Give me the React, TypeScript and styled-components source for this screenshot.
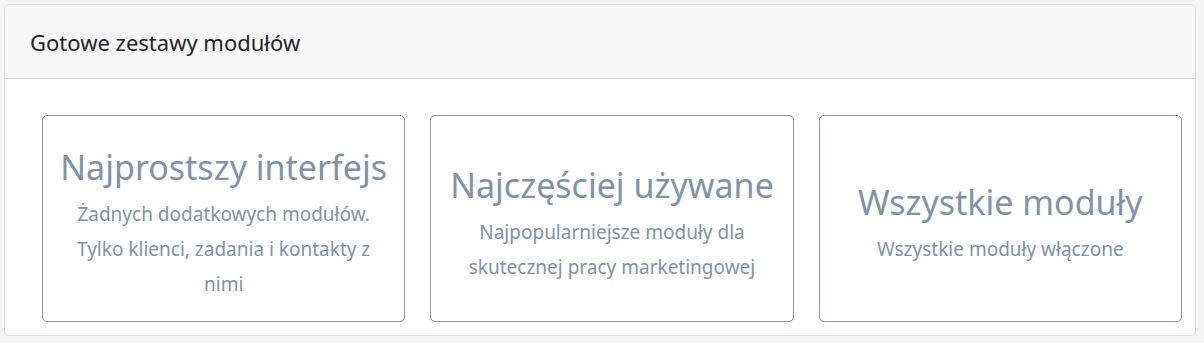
import React from 'react';
import styled, { createGlobalStyle } from 'styled-components';

const GlobalStyle = createGlobalStyle`
  body {
    margin: 0;
    background: #f4f4f4;
    font-family: "Noto Sans", "Open Sans", sans-serif;
  }
`;

const presets = [
  {
    title: 'Najprostszy interfejs',
    text: 'Żadnych dodatkowych modułów. Tylko klienci, zadania i kontakty z nimi',
  },
  {
    title: 'Najczęściej używane',
    text: 'Najpopularniejsze moduły dla skutecznej pracy marketingowej',
  },
  {
    title: 'Wszystkie moduły',
    text: 'Wszystkie moduły włączone',
  },
];

export default function App() {
  return (
    <>
      <GlobalStyle />
      <Page>
        <Panel>
          <PanelHeader>Gotowe zestawy modułów</PanelHeader>
          <PanelBody>
            {presets.map((p) => (
              <PresetCard key={p.title}>
                <PresetTitle>{p.title}</PresetTitle>
                <PresetText>{p.text}</PresetText>
              </PresetCard>
            ))}
          </PanelBody>
        </Panel>
      </Page>
    </>
  );
}

const Page = styled.div`
  padding: 4px 8px 8px 4px;
`;

const Panel = styled.section`
  background: #fff;
  border: 1px solid #dedede;
  border-radius: 5px;
  overflow: hidden;
`;

const PanelHeader = styled.header`
  height: 73px;
  display: flex;
  align-items: center;
  padding: 0 25px;
  background: #f7f7f7;
  border-bottom: 1px solid #dcdcdc;
  font-size: 22px;
  color: #212529;
`;

const PanelBody = styled.div`
  display: flex;
  gap: 25px;
  padding: 36px 13px 13px 37px;
`;

const PresetCard = styled.div`
  flex: 1;
  height: 207px;
  box-sizing: border-box;
  display: flex;
  flex-direction: column;
  justify-content: center;
  align-items: center;
  padding: 12px 12px 0;
  border: 1px solid #8a99ab;
  border-radius: 5px;
  text-align: center;
  color: #8093a7;
`;

const PresetTitle = styled.h2`
  margin: 0 0 9px;
  font-size: 34px;
  font-weight: 400;
  line-height: 41px;
`;

const PresetText = styled.p`
  margin: 0;
  font-size: 19px;
  line-height: 35px;
`;
